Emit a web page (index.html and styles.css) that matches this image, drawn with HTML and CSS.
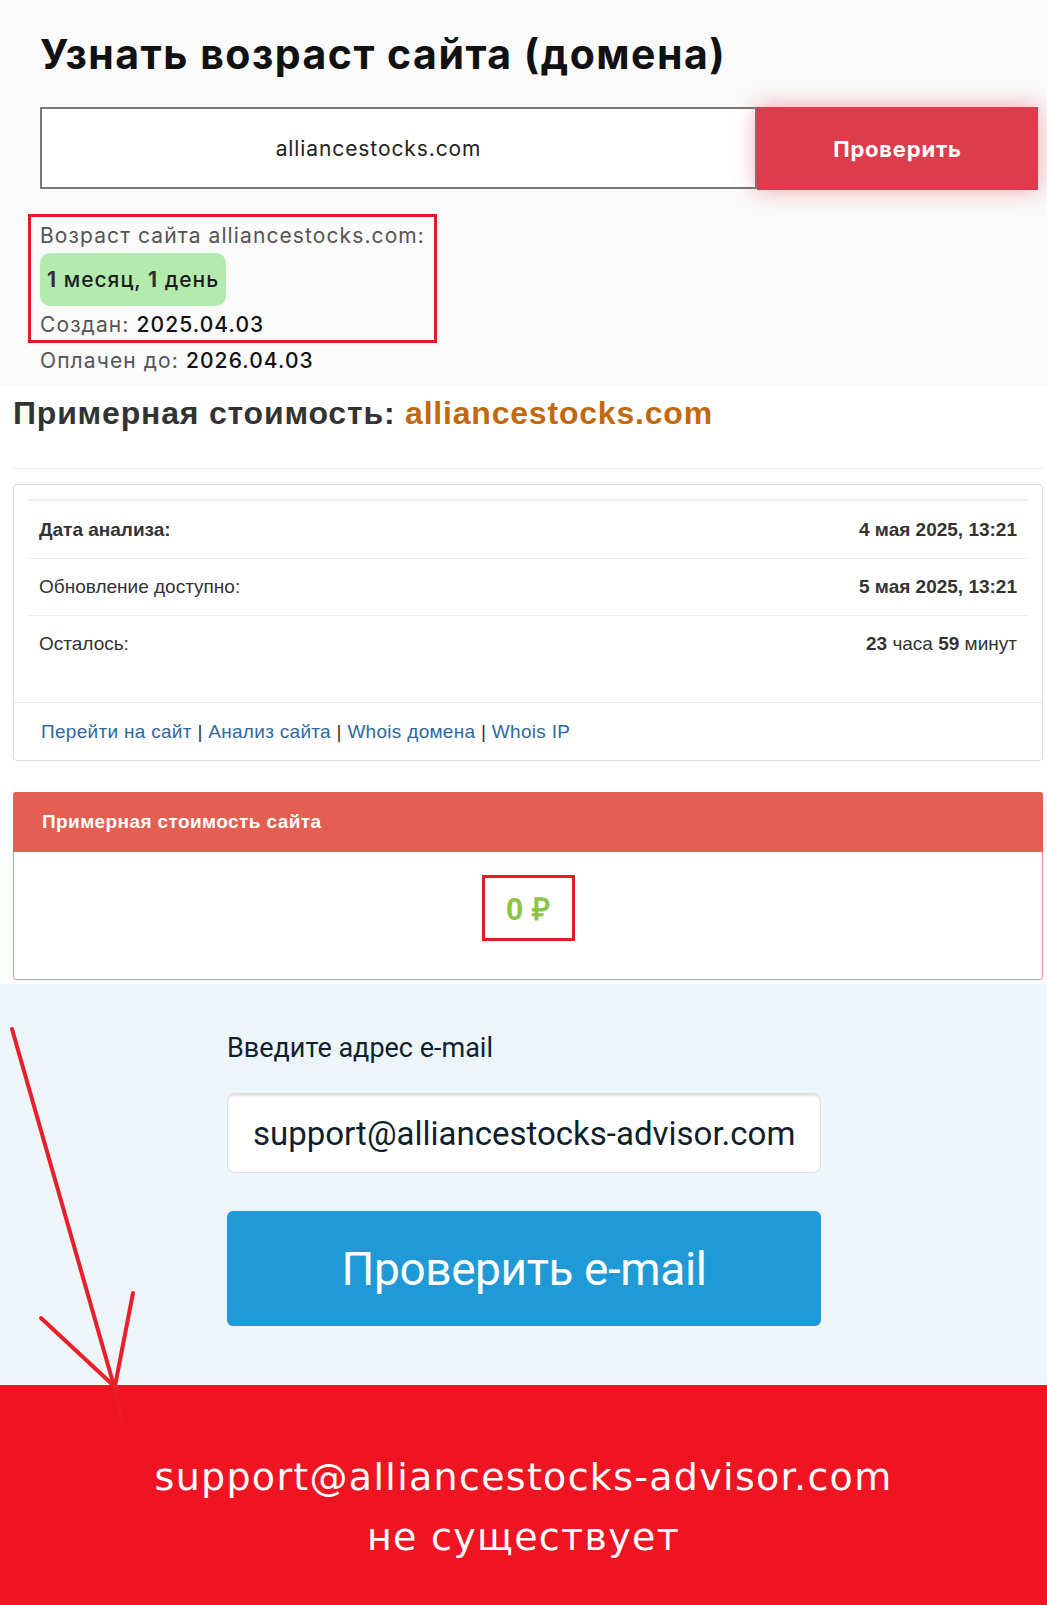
FILE: index.html
```html
<!DOCTYPE html>
<html lang="ru">
<head>
  <meta charset="UTF-8" />
  <meta name="viewport" content="width=device-width, initial-scale=1.0" />
  <title>Возраст сайта</title>
  <link rel="stylesheet" href="styles.css">
</head>
<body>
  <section class="age">
    <h1 class="age-title">Узнать возраст сайта (домена)</h1>
    <form class="age-form">
      <input class="age-input" type="text" value="alliancestocks.com" readonly>
      <button class="age-btn" type="button">Проверить</button>
    </form>
    <div class="age-result">
      <div class="marked age-box">
        <div class="age-line">Возраст сайта alliancestocks.com:</div>
        <div class="age-pill"><b>1</b> месяц, <b>1</b> день</div>
        <div class="age-line">Создан: <span>2025.04.03</span></div>
      </div>
      <div class="age-line">Оплачен до: <span>2026.04.03</span></div>
    </div>
  </section>

  <section class="cost">
    <h2 class="cost-title">Примерная стоимость: <span>alliancestocks.com</span></h2>
    <hr class="cost-hr">

    <div class="panel">
      <div class="panel-body">
        <div class="info-row first">
          <b>Дата анализа:</b>
          <b>4 мая 2025, 13:21</b>
        </div>
        <div class="info-row">
          <span>Обновление доступно:</span>
          <b>5 мая 2025, 13:21</b>
        </div>
        <div class="info-row">
          <span>Осталось:</span>
          <span><b>23</b> часа <b>59</b> минут</span>
        </div>
      </div>
      <div class="panel-footer">
        <a href="#">Перейти на сайт</a> | <a href="#">Анализ сайта</a> | <a href="#">Whois домена</a> | <a href="#">Whois IP</a>
      </div>
    </div>

    <div class="panel panel-red">
      <div class="panel-heading">Примерная стоимость сайта</div>
      <div class="price-wrap">
        <div class="marked price">0 ₽</div>
      </div>
    </div>
  </section>

  <section class="mail">
    <div class="mail-col">
      <div class="mail-label">Введите адрес e-mail</div>
      <input class="mail-input" type="text" value="support@alliancestocks-advisor.com" readonly>
      <button class="mail-btn" type="button">Проверить e-mail</button>
    </div>
  </section>

  <section class="verdict">
    <div>support@alliancestocks-advisor.com</div>
    <div>не существует</div>
  </section>

  <!-- hand drawn arrow on top of the screenshot -->
  <svg class="arrow" width="1047" height="1605" viewBox="0 0 1047 1605">
    <g stroke="#e8202b" stroke-width="4" stroke-linecap="round" fill="none">
      <line x1="12" y1="1029" x2="114" y2="1386" />
      <line x1="114" y1="1386" x2="122" y2="1420" stroke-opacity="0.5" />
      <line x1="41" y1="1318" x2="114" y2="1386" />
      <line x1="133" y1="1293" x2="115" y2="1386" />
    </g>
  </svg>
</body>
</html>
```

FILE: styles.css
```css
:root {
  --mark: #e21c26;
  --dark: #111;
  --gray: #555;
  --red-btn: #dc3c4b;
  --blue-btn: #1f9ad6;
}

body {
  margin: 0;
  width: 1047px;
  position: relative;
  background: #fff;
  font-family: 'Inter', 'Liberation Sans', sans-serif;
}

.marked {
  border: 3px solid var(--mark);
}

/* ---- age block ---- */

.age {
  background: #fafafa;
  padding: 30px 9px 12px 40px;
}

.age-title {
  margin: 0;
  font-size: 41px;
  line-height: 48px;
  font-weight: 700;
  letter-spacing: 1.5px;
  color: var(--dark);
}

.age-form {
  display: flex;
  margin-top: 29px;
}

.age-input {
  flex: 1;
  height: 82px;
  box-sizing: border-box;
  border: 2px solid #777;
  background: #fff;
  padding: 0 40px 0 0;
  font-family: 'Inter', sans-serif;
  font-size: 21px;
  letter-spacing: 0.9px;
  color: #222;
  text-align: center;
  outline: none;
}

.age-btn {
  width: 281px;
  height: 83px;
  border: none;
  background: var(--red-btn);
  color: #fff;
  font-family: 'Inter', sans-serif;
  font-size: 22px;
  font-weight: 700;
  letter-spacing: 0.8px;
  box-shadow: 0 0 22px rgba(224, 60, 75, 0.45);
}

.age-result {
  margin-top: 24px;
}

.age-box {
  width: 394px;
  margin-left: -12px;
  padding: 5px 0 1px 9px;
}

.age-line {
  font-size: 21px;
  line-height: 28px;
  letter-spacing: 1.1px;
  color: var(--gray);
}

.age-line span {
  color: var(--dark);
  font-weight: 500;
}

.age-result > .age-line {
  margin-top: 4px;
}

.age-box .age-line + .age-pill {
  margin-top: 3px;
}

.age-pill + .age-line {
  margin-top: 5px;
}

.age-pill {
  display: inline-block;
  padding: 12px 7px;
  line-height: 29px;
  font-size: 21px;
  font-weight: 500;
  letter-spacing: 1px;
  color: #1d1d1d;
  background: #b3eaae;
  border-radius: 10px;
}

.age-pill b {
  color: #333;
}

/* ---- cost block ---- */

.cost {
  padding: 8px 4px 0 13px;
  font-family: 'Liberation Sans', Arial, sans-serif;
}

.cost-title {
  margin: 0;
  font-size: 32px;
  line-height: 36px;
  font-weight: 700;
  letter-spacing: 0.8px;
  color: #333;
}

.cost-title span {
  color: #c0690f;
}

.cost-hr {
  margin: 37px 0 15px;
  border: none;
  border-top: 1px solid #eee;
}

.panel {
  border: 1px solid #ddd;
  border-radius: 4px;
  background: #fff;
}

.panel-body {
  padding: 14px 14px 30px;
}

.info-row {
  display: flex;
  justify-content: space-between;
  align-items: center;
  height: 56px;
  padding: 0 11px;
  border-top: 1px solid #eee;
  font-size: 19px;
  color: #333;
}

.info-row.first {
  border-top: 2px solid #eee;
  height: 57px;
}

.panel-footer {
  border-top: 1px solid #e8e8e8;
  height: 57px;
  padding-left: 27px;
  display: flex;
  align-items: center;
  font-size: 19px;
  letter-spacing: 0.3px;
  color: #333;
  white-space: pre;
}

.panel-footer a {
  color: #30689f;
  text-decoration: none;
}

.panel-red {
  margin-top: 31px;
  border-color: #e9998f;
  border-radius: 3px;
}

.panel-heading {
  background: #e35f51;
  height: 60px;
  margin: -1px -1px 0;
  padding-left: 29px;
  display: flex;
  align-items: center;
  color: #fff;
  font-size: 19px;
  font-weight: 700;
  letter-spacing: 0.4px;
  border-radius: 3px 3px 0 0;
}

.price-wrap {
  display: flex;
  justify-content: center;
  padding: 23px 0 38px;
}

.price {
  width: 87px;
  height: 60px;
  display: flex;
  align-items: center;
  justify-content: center;
  font-size: 31px;
  font-weight: 700;
  color: #8bc34a;
}

/* ---- e-mail check ---- */

.mail {
  margin-top: 4px;
  background: #eef5f9;
  padding: 49px 0 59px;
  font-family: 'Roboto', sans-serif;
}

.mail-col {
  width: 594px;
  margin-left: 227px;
  display: flex;
  flex-direction: column;
}

.mail-label {
  font-size: 27px;
  line-height: 30px;
  color: #10222f;
}

.mail-input {
  margin-top: 30px;
  height: 80px;
  box-sizing: border-box;
  border: 1px solid #d9dee1;
  border-radius: 8px;
  background: #fff;
  box-shadow: inset 0 3px 2px -1px rgba(0, 0, 0, 0.12);
  padding: 0 0 0 25px;
  font-family: 'Roboto', sans-serif;
  font-size: 33px;
  color: #0d1f2d;
  outline: none;
}

.mail-btn {
  margin-top: 38px;
  height: 115px;
  border: none;
  border-radius: 6px;
  background: var(--blue-btn);
  color: #fff;
  font-family: 'Roboto', sans-serif;
  font-size: 46px;
  letter-spacing: -0.4px;
}

/* ---- result banner ---- */

.verdict {
  background: #ee1421;
  height: 220px;
  box-sizing: border-box;
  padding-top: 62px;
  text-align: center;
  color: #fff;
  font-family: 'DejaVu Sans', sans-serif;
  font-size: 38px;
  line-height: 60px;
  letter-spacing: 1.3px;
}

.arrow {
  position: absolute;
  top: 0;
  left: 0;
  pointer-events: none;
}
```
